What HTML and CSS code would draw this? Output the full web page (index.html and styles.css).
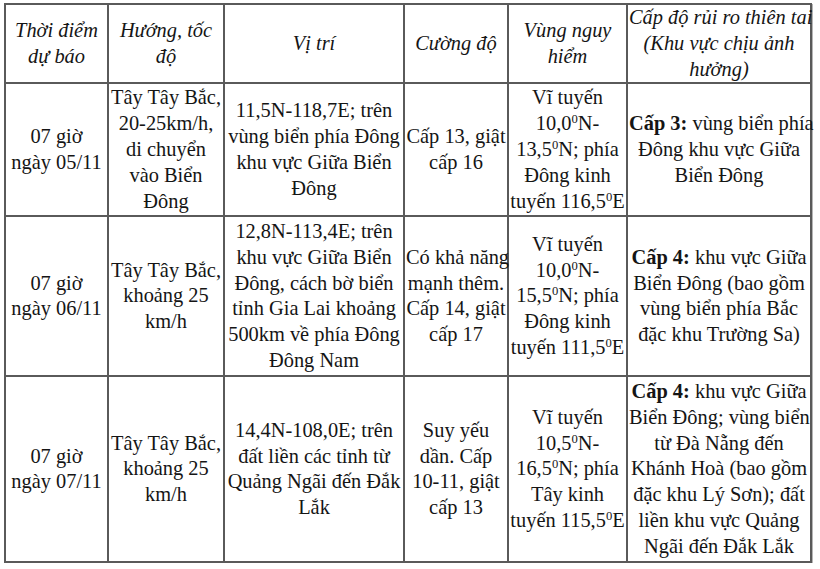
FILE: index.html
```html
<!DOCTYPE html>
<html lang="vi">
<head>
<meta charset="utf-8">
<title>Dự báo bão</title>
<link rel="stylesheet" href="styles.css">
</head>
<body>
<table class="forecast">
  <colgroup>
    <col class="c1"><col class="c2"><col class="c3"><col class="c4"><col class="c5"><col class="c6">
  </colgroup>
  <thead>
    <tr class="r-head">
      <th>Thời điểm<br>dự báo</th>
      <th>Hướng, tốc<br>độ</th>
      <th>Vị trí</th>
      <th>Cường độ</th>
      <th>Vùng nguy<br>hiểm</th>
      <th>Cấp độ rủi ro thiên tai<br>(Khu vực chịu ảnh<br>hưởng)</th>
    </tr>
  </thead>
  <tbody>
    <tr class="r1">
      <td>07 giờ<br>ngày 05/11</td>
      <td>Tây Tây Bắc,<br>20-25km/h,<br>di chuyển<br>vào Biển<br>Đông</td>
      <td>11,5N-118,7E; trên<br>vùng biển phía Đông<br>khu vực Giữa Biển<br>Đông</td>
      <td>Cấp 13, giật<br>cấp 16</td>
      <td>Vĩ tuyến<br>10,0<sup class="deg">0</sup>N-<br>13,5<sup class="deg">0</sup>N; phía<br>Đông kinh<br>tuyến 116,5<sup class="deg">0</sup>E</td>
      <td><b>Cấp 3:</b> vùng biển phía<br>Đông khu vực Giữa<br>Biển Đông</td>
    </tr>
    <tr class="r2">
      <td>07 giờ<br>ngày 06/11</td>
      <td>Tây Tây Bắc,<br>khoảng 25<br>km/h</td>
      <td>12,8N-113,4E; trên<br>khu vực Giữa Biển<br>Đông, cách bờ biển<br>tỉnh Gia Lai khoảng<br>500km về phía Đông<br>Đông Nam</td>
      <td>Có khả năng<br>mạnh thêm.<br>Cấp 14, giật<br>cấp 17</td>
      <td>Vĩ tuyến<br>10,0<sup class="deg">0</sup>N-<br>15,5<sup class="deg">0</sup>N; phía<br>Đông kinh<br>tuyến 111,5<sup class="deg">0</sup>E</td>
      <td><b>Cấp 4:</b> khu vực Giữa<br>Biển Đông (bao gồm<br>vùng biển phía Bắc<br>đặc khu Trường Sa)</td>
    </tr>
    <tr class="r3">
      <td>07 giờ<br>ngày 07/11</td>
      <td>Tây Tây Bắc,<br>khoảng 25<br>km/h</td>
      <td>14,4N-108,0E; trên<br>đất liền các tỉnh từ<br>Quảng Ngãi đến Đắk<br>Lắk</td>
      <td>Suy yếu<br>dần. Cấp<br>10-11, giật<br>cấp 13</td>
      <td>Vĩ tuyến<br>10,5<sup class="deg">0</sup>N-<br>16,5<sup class="deg">0</sup>N; phía<br>Tây kinh<br>tuyến 115,5<sup class="deg">0</sup>E</td>
      <td><b>Cấp 4:</b> khu vực Giữa<br>Biển Đông; vùng biển<br>từ Đà Nẵng đến<br>Khánh Hoà (bao gồm<br>đặc khu Lý Sơn); đất<br>liền khu vực Quảng<br>Ngãi đến Đắk Lắk</td>
    </tr>
  </tbody>
</table>
</body>
</html>
```
FILE: styles.css
```css
html, body {
  background: #ffffff;
}
body {
  margin: 3px 0 0 4px;
  font-family: "Liberation Serif", "Times New Roman", serif;
  color: #151515;
}
.forecast {
  border-collapse: collapse;
  table-layout: fixed;
  width: 808px;
  font-size: 20.4px;
  line-height: 25.8px;
  border: 2px solid #444;
  box-shadow: 1px 1px 0 #b5b5b5;
}
.c1 { width: 103px; }
.c2 { width: 116px; }
.c3 { width: 180px; }
.c4 { width: 104px; }
.c5 { width: 119px; }
.c6 { width: 184px; }
.forecast th,
.forecast td {
  border: 2px solid #5a5a5a;
  padding: 0 1px;
  text-align: center;
  vertical-align: middle;
  white-space: nowrap;
  overflow: visible;
}
.forecast th {
  font-style: italic;
  font-weight: normal;
}
.r-head { height: 79px; }
.r1 { height: 133px; }
.r2 { height: 160px; }
.r3 { height: 186px; }
.deg {
  font-size: 0.62em;
  line-height: 0;
  vertical-align: 0.55em;
}
b {
  font-weight: bold;
}
```
